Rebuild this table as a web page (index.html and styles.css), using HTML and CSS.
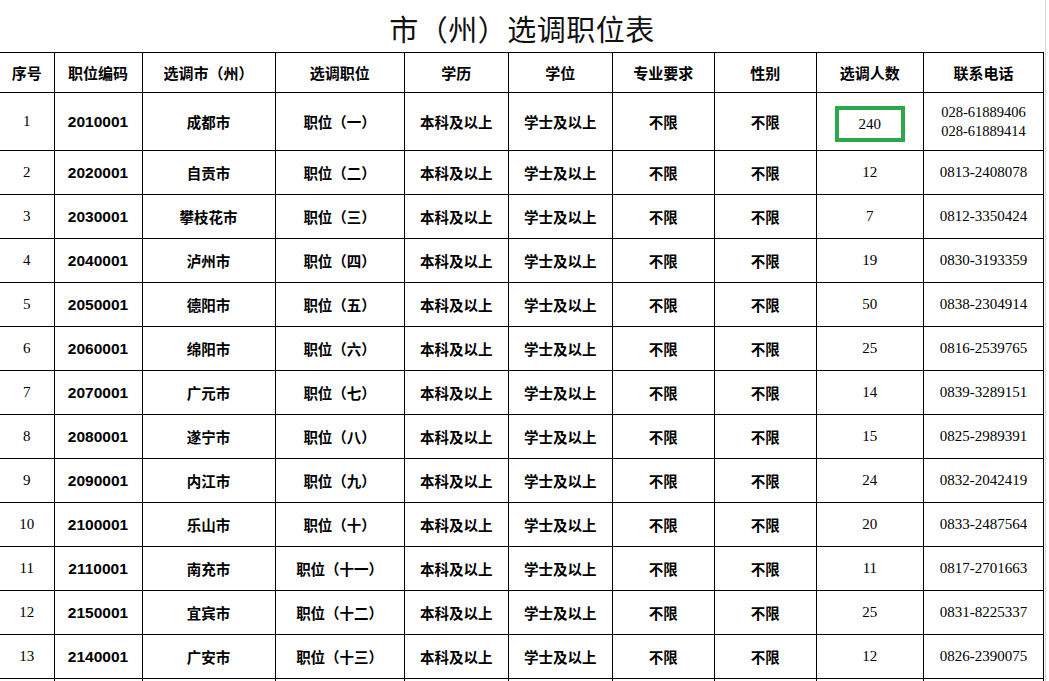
FILE: index.html
```html
<!DOCTYPE html>
<html lang="zh-CN">
<head>
<meta charset="utf-8">
<title>市（州）选调职位表</title>
<link rel="stylesheet" href="styles.css">
</head>
<body>
<div class="page">
  <div class="sheet">
    <h1 class="title">市（州）选调职位表</h1>
    <table class="grid">
      <colgroup>
        <col class="c-no"><col class="c-code"><col class="c-city"><col class="c-post"><col class="c-edu">
        <col class="c-deg"><col class="c-major"><col class="c-sex"><col class="c-num"><col class="c-tel">
      </colgroup>
      <thead>
        <tr class="head">
          <th class="first">序号</th><th>职位编码</th><th>选调市（州）</th><th>选调职位</th><th>学历</th>
          <th>学位</th><th>专业要求</th><th>性别</th><th>选调人数</th><th>联系电话</th>
        </tr>
      </thead>
      <tbody>
        <tr class="tall">
          <td class="first num">1</td><td class="code">2010001</td><td class="cjk">成都市</td><td class="cjk">职位（一）</td><td class="cjk">本科及以上</td>
          <td class="cjk">学士及以上</td><td class="cjk">不限</td><td class="cjk">不限</td>
          <td class="num"><span class="mark">240</span></td>
          <td class="num tel">028-61889406<br>028-61889414</td>
        </tr>
        <tr>
          <td class="first num">2</td><td class="code">2020001</td><td class="cjk">自贡市</td><td class="cjk">职位（二）</td><td class="cjk">本科及以上</td>
          <td class="cjk">学士及以上</td><td class="cjk">不限</td><td class="cjk">不限</td><td class="num">12</td><td class="num">0813-2408078</td>
        </tr>
        <tr>
          <td class="first num">3</td><td class="code">2030001</td><td class="cjk">攀枝花市</td><td class="cjk">职位（三）</td><td class="cjk">本科及以上</td>
          <td class="cjk">学士及以上</td><td class="cjk">不限</td><td class="cjk">不限</td><td class="num">7</td><td class="num">0812-3350424</td>
        </tr>
        <tr>
          <td class="first num">4</td><td class="code">2040001</td><td class="cjk">泸州市</td><td class="cjk">职位（四）</td><td class="cjk">本科及以上</td>
          <td class="cjk">学士及以上</td><td class="cjk">不限</td><td class="cjk">不限</td><td class="num">19</td><td class="num">0830-3193359</td>
        </tr>
        <tr>
          <td class="first num">5</td><td class="code">2050001</td><td class="cjk">德阳市</td><td class="cjk">职位（五）</td><td class="cjk">本科及以上</td>
          <td class="cjk">学士及以上</td><td class="cjk">不限</td><td class="cjk">不限</td><td class="num">50</td><td class="num">0838-2304914</td>
        </tr>
        <tr>
          <td class="first num">6</td><td class="code">2060001</td><td class="cjk">绵阳市</td><td class="cjk">职位（六）</td><td class="cjk">本科及以上</td>
          <td class="cjk">学士及以上</td><td class="cjk">不限</td><td class="cjk">不限</td><td class="num">25</td><td class="num">0816-2539765</td>
        </tr>
        <tr>
          <td class="first num">7</td><td class="code">2070001</td><td class="cjk">广元市</td><td class="cjk">职位（七）</td><td class="cjk">本科及以上</td>
          <td class="cjk">学士及以上</td><td class="cjk">不限</td><td class="cjk">不限</td><td class="num">14</td><td class="num">0839-3289151</td>
        </tr>
        <tr>
          <td class="first num">8</td><td class="code">2080001</td><td class="cjk">遂宁市</td><td class="cjk">职位（八）</td><td class="cjk">本科及以上</td>
          <td class="cjk">学士及以上</td><td class="cjk">不限</td><td class="cjk">不限</td><td class="num">15</td><td class="num">0825-2989391</td>
        </tr>
        <tr>
          <td class="first num">9</td><td class="code">2090001</td><td class="cjk">内江市</td><td class="cjk">职位（九）</td><td class="cjk">本科及以上</td>
          <td class="cjk">学士及以上</td><td class="cjk">不限</td><td class="cjk">不限</td><td class="num">24</td><td class="num">0832-2042419</td>
        </tr>
        <tr>
          <td class="first num">10</td><td class="code">2100001</td><td class="cjk">乐山市</td><td class="cjk">职位（十）</td><td class="cjk">本科及以上</td>
          <td class="cjk">学士及以上</td><td class="cjk">不限</td><td class="cjk">不限</td><td class="num">20</td><td class="num">0833-2487564</td>
        </tr>
        <tr>
          <td class="first num">11</td><td class="code">2110001</td><td class="cjk">南充市</td><td class="cjk">职位（十一）</td><td class="cjk">本科及以上</td>
          <td class="cjk">学士及以上</td><td class="cjk">不限</td><td class="cjk">不限</td><td class="num">11</td><td class="num">0817-2701663</td>
        </tr>
        <tr>
          <td class="first num">12</td><td class="code">2150001</td><td class="cjk">宜宾市</td><td class="cjk">职位（十二）</td><td class="cjk">本科及以上</td>
          <td class="cjk">学士及以上</td><td class="cjk">不限</td><td class="cjk">不限</td><td class="num">25</td><td class="num">0831-8225337</td>
        </tr>
        <tr>
          <td class="first num">13</td><td class="code">2140001</td><td class="cjk">广安市</td><td class="cjk">职位（十三）</td><td class="cjk">本科及以上</td>
          <td class="cjk">学士及以上</td><td class="cjk">不限</td><td class="cjk">不限</td><td class="num">12</td><td class="num">0826-2390075</td>
        </tr>
        <tr class="cut">
          <td class="first"></td><td></td><td></td><td></td><td></td><td></td><td></td><td></td><td></td><td></td>
        </tr>
      </tbody>
    </table>
  </div>
  <div class="gridline"></div>
</div>
</body>
</html>
```

FILE: styles.css
```css
html, body {
  margin: 0;
  padding: 0;
  background: #ffffff;
  overflow: hidden;
  height: 681px;
}

.page {
  display: flex;
  align-items: stretch;
  height: 681px;
  overflow: hidden;
}

.sheet {
  width: 1044px;
  flex: none;
}

.gridline {
  width: 1px;
  margin-left: 1px;
  background: #d6d6d6;
  flex: none;
}

.title {
  margin: 0;
  height: 48px;
  padding-top: 4px;
  line-height: 48px;
  text-align: center;
  font-family: "Noto Sans CJK SC", sans-serif;
  font-weight: 400;
  font-size: 29px;
  color: #111111;
  letter-spacing: 0.5px;
}

.grid {
  border-collapse: collapse;
  table-layout: fixed;
  width: 1044px;
  margin-left: 0;
  color: #000000;
}

.c-no { width: 54px; }
.c-code { width: 88px; }
.c-city { width: 133px; }
.c-post { width: 129px; }
.c-edu { width: 104px; }
.c-deg { width: 104px; }
.c-major { width: 102px; }
.c-sex { width: 102px; }
.c-num { width: 107px; }
.c-tel { width: 120px; }

.grid th,
.grid td {
  border: 1px solid #000000;
  padding: 0;
  text-align: center;
  vertical-align: middle;
}

.grid .first {
  border-left: none;
}

.head {
  height: 40px;
}

.grid th {
  font-family: "Noto Sans CJK SC", sans-serif;
  font-weight: 700;
  font-size: 15px;
}

.grid tbody tr {
  height: 44px;
}

.grid tbody tr.tall {
  height: 58px;
}

.cjk {
  font-family: "Noto Sans CJK SC", sans-serif;
  font-weight: 700;
  font-size: 14.5px;
}

.code {
  font-family: "Liberation Sans", Arial, sans-serif;
  font-weight: 700;
  font-size: 15.5px;
}

.num {
  font-family: "Liberation Serif", "Times New Roman", serif;
  font-size: 15px;
}

.tel {
  line-height: 19px;
  font-size: 14.5px;
}

.mark {
  display: inline-block;
  box-sizing: border-box;
  width: 70px;
  height: 36px;
  line-height: 28px;
  border: 4px solid #2aa84a;
  margin-top: 4px;
}
```
